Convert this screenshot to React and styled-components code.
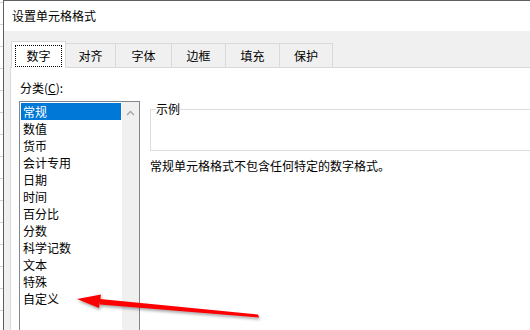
import React from 'react';
import styled, {createGlobalStyle} from 'styled-components';

const GlobalStyle = createGlobalStyle`
  html, body {
    margin: 0;
    padding: 0;
    width: 530px;
    height: 330px;
    overflow: hidden;
    background: #ffffff;
    font-family: "Noto Sans CJK SC", "Noto Sans", sans-serif;
    font-size: 12px;
    color: #000000;
  }
`

const Screen = styled.div`
  position: relative;
  display: flex;
  width: 530px;
  height: 330px;
  overflow: hidden;
`

const SheetStrip = styled.div`
  width: 3px;
  flex-shrink: 0;
  background: repeating-linear-gradient(
    to bottom,
    #ffffff 0px,
    #ffffff 2px,
    #d4d4d4 2px,
    #d4d4d4 3px,
    #ffffff 3px,
    #ffffff 22px
  );
`

const Dialog = styled.div`
  display: flex;
  flex-direction: column;
  width: 620px;
  flex-shrink: 0;
  border-left: 1px solid #5f5f5f;
  border-top: 1px solid #5f5f5f;
  background: #f0f0f0;
  overflow: hidden;
`

const TitleBar = styled.div`
  height: 30px;
  flex-shrink: 0;
  background: #ffffff;
  display: flex;
  align-items: center;
  padding-left: 8px;
  line-height: 16px;
`

const Body = styled.div`
  flex: 1;
  min-height: 0;
  padding: 10px 0 0 6px;
  display: flex;
  flex-direction: column;
`

const TabRow = styled.div`
  display: flex;
  flex-shrink: 0;
  align-items: flex-end;
  height: 26px;
  margin-left: 1px;
`

const Tab = styled.div`
  position: relative;
  box-sizing: border-box;
  width: ${p => p.$w}px;
  height: ${p => (p.$active ? 27 : 24)}px;
  margin-left: ${p => (p.$first ? 0 : -1)}px;
  margin-bottom: ${p => (p.$active ? -1 : 0)}px;
  z-index: ${p => (p.$active ? 1 : 0)};
  border: 1px solid #d9d9d9;
  border-bottom: none;
  background: ${p => (p.$active ? '#ffffff' : '#f0f0f0')};
  display: flex;
  align-items: center;
  justify-content: center;
  line-height: 16px;
`

const FocusRing = styled.span`
  box-sizing: border-box;
  display: flex;
  align-items: center;
  justify-content: center;
  width: calc(100% - 6px);
  height: 22px;
  margin-top: 1px;
  border: 1px dotted #000000;
`

const Panel = styled.div`
  flex: 1;
  min-height: 0;
  background: #ffffff;
  border-top: 1px solid #d9d9d9;
  border-left: 1px solid #d9d9d9;
  display: flex;
  align-items: flex-start;
  padding: 12px 0 0 8px;
`

const LeftCol = styled.div`
  width: 121px;
  flex-shrink: 0;
  display: flex;
  flex-direction: column;
`

const FieldLabel = styled.div`
  line-height: 16px;
  height: 16px;
  margin-bottom: 5px;
  padding-left: 1px;
`

const ListBox = styled.div`
  box-sizing: border-box;
  width: 121px;
  height: 250px;
  flex-shrink: 0;
  border: 1px solid #828790;
  display: flex;
`

const Items = styled.div`
  flex: 1;
  padding: 1px;
  display: flex;
  flex-direction: column;
`

const Item = styled.div`
  height: 17px;
  flex-shrink: 0;
  line-height: 17px;
  padding-left: 2px;
  background: ${p => (p.$selected ? '#0078d7' : 'transparent')};
  color: ${p => (p.$selected ? '#ffffff' : '#000000')};
  white-space: nowrap;
`

const ScrollTrack = styled.div`
  width: 17px;
  background: #f0f0f0;
  display: flex;
  justify-content: center;
  padding-top: 8px;
  box-sizing: border-box;
`

const RightCol = styled.div`
  margin-left: 10px;
  width: 420px;
  flex-shrink: 0;
  padding-top: 21px;
  display: flex;
  flex-direction: column;
`

const GroupBox = styled.fieldset`
  margin: 0;
  padding: 0 6px 0 5px;
  border: 1px solid #dcdcdc;
  min-width: 0;
`

const Legend = styled.legend`
  padding: 0;
  line-height: 16px;
`

const GroupBody = styled.div`
  height: 33px;
`

const Description = styled.div`
  margin-top: 7px;
  line-height: 16px;
`

const ArrowLayer = styled.svg`
  position: absolute;
  left: 0;
  top: 0;
  pointer-events: none;
  filter: drop-shadow(1px 2px 1.5px rgba(0, 0, 0, 0.35));
`

const tabs = [
    {label: '数字', w: 55},
    {label: '对齐', w: 51},
    {label: '字体', w: 57},
    {label: '边框', w: 55},
    {label: '填充', w: 55},
    {label: '保护', w: 54},
];

const categories = ['常规', '数值', '货币', '会计专用', '日期', '时间', '百分比', '分数', '科学记数', '文本', '特殊', '自定义'];

const App = () => {
    return (
        <>
            <GlobalStyle/>
            <Screen>
                <SheetStrip/>
                <Dialog>
                    <TitleBar>设置单元格格式</TitleBar>
                    <Body>
                        <TabRow>
                            {tabs.map((t, i) => (
                                <Tab key={t.label} $w={t.w} $active={i === 0} $first={i === 0}>
                                    {i === 0 ? <FocusRing>{t.label}</FocusRing> : t.label}
                                </Tab>
                            ))}
                        </TabRow>
                        <Panel>
                            <LeftCol>
                                <FieldLabel>分类(<u>C</u>):</FieldLabel>
                                <ListBox>
                                    <Items>
                                        {categories.map((c, i) => (
                                            <Item key={c} $selected={i === 0}>{c}</Item>
                                        ))}
                                    </Items>
                                    <ScrollTrack>
                                        <svg width="9" height="6" viewBox="0 0 9 6">
                                            <polyline points="1,5 4.5,1.5 8,5" fill="none" stroke="#a3a3a3" strokeWidth="1.3"/>
                                        </svg>
                                    </ScrollTrack>
                                </ListBox>
                            </LeftCol>
                            <RightCol>
                                <GroupBox>
                                    <Legend>示例</Legend>
                                    <GroupBody/>
                                </GroupBox>
                                <Description>常规单元格格式不包含任何特定的数字格式。</Description>
                            </RightCol>
                        </Panel>
                    </Body>
                </Dialog>
                <ArrowLayer width="530" height="330" viewBox="0 0 530 330">
                    <polygon points="258,314.5 259,317.5 100,304.5 100,299" fill="#ff0000"/>
                    <polygon points="77,299 101,294.5 99,308" fill="#ff0000"/>
                </ArrowLayer>
            </Screen>
        </>
    );
};

export default App;
